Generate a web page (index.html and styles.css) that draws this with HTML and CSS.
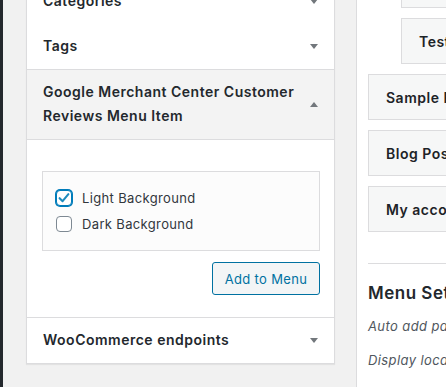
FILE: index.html
```html
<!DOCTYPE html>
<html>
<head>
<meta charset="utf-8">
<link rel="stylesheet" href="styles.css">
</head>
<body>
<div class="page">
  <div class="strip"></div>
  <div class="left">
    <div class="panel">
      <div class="sec">
        <h3 class="title"><span class="title-text">Categories</span><span class="arrow down"></span></h3>
      </div>
      <div class="sec">
        <h3 class="title"><span class="title-text">Tags</span><span class="arrow down"></span></h3>
      </div>
      <div class="sec open">
        <h3 class="title"><span class="title-text">Google Merchant Center Customer Reviews Menu Item</span><span class="arrow up"></span></h3>
        <div class="content">
          <fieldset class="choices">
            <label class="choice">
              <span class="box checked">
                <svg width="14" height="14" viewBox="0 0 14 14"><path d="M2.6 7.2 L5.6 10.2 L11.4 3.2" fill="none" stroke="#1e8cbe" stroke-width="2.1" stroke-linecap="round" stroke-linejoin="round"/></svg>
              </span>
              <span class="choice-label">Light Background</span>
            </label>
            <label class="choice">
              <span class="box"></span>
              <span class="choice-label">Dark Background</span>
            </label>
          </fieldset>
          <div class="actions">
            <button class="btn">Add to Menu</button>
          </div>
        </div>
      </div>
      <div class="sec last">
        <h3 class="title"><span class="title-text">WooCommerce endpoints</span><span class="arrow down"></span></h3>
      </div>
    </div>
  </div>
  <div class="right">
    <div class="item sub"></div>
    <div class="item sub"><span>Test</span></div>
    <div class="item"><span>Sample Page</span></div>
    <div class="item"><span>Blog Posts</span></div>
    <div class="item"><span>My account</span></div>
    <div class="settings">
      <h3 class="settings-title">Menu Settings</h3>
      <p class="setting">Auto add pages</p>
      <p class="setting">Display location</p>
    </div>
  </div>
</div>
</body>
</html>
```

FILE: styles.css
```css
html, body {
  margin: 0;
  padding: 0;
  height: 100%;
  overflow: hidden;
}
body {
  background: #f1f1f1;
  font-family: Inter, "Liberation Sans", sans-serif;
  color: #23282d;
}
.page {
  display: flex;
  height: 387px;
  overflow: hidden;
}
.strip {
  width: 3px;
  flex: none;
  background: #23282d;
}
.left {
  flex: none;
  padding-left: 23px;
  padding-right: 21px;
}
.panel {
  width: 307px;
  margin-top: -22px;
  border: 1px solid #dcdcde;
  background: #fff;
  box-shadow: 0 1px 1px rgba(0,0,0,0.06);
}
.title {
  margin: 0;
  display: flex;
  align-items: center;
  padding: 10px 16px 11px 16px;
  font-size: 14px;
  font-weight: 600;
  line-height: 24px;
  letter-spacing: 0.5px;
  color: #23282d;
}
.title-text {
  flex: 1;
  padding-right: 6px;
}
.arrow {
  width: 0;
  height: 0;
  border-left: 4px solid transparent;
  border-right: 4px solid transparent;
  flex: none;
}
.arrow.down {
  border-top: 5px solid #72777c;
}
.arrow.up {
  border-bottom: 5px solid #72777c;
}
.sec.open {
  border-top: 1px solid #dcdcde;
  border-bottom: 1px solid #dcdcde;
}
.sec.open .title {
  background: #f3f3f3;
  border-bottom: 1px solid #dcdcde;
}
.content {
  padding: 31px 14px 22px 15px;
}
.choices {
  margin: 0;
  border: 1px solid #dcdcde;
  background: #fcfcfc;
  padding: 13px 12px 13px 13px;
}
.choice {
  display: flex;
  align-items: center;
  height: 26px;
  font-size: 13px;
  letter-spacing: 0.35px;
  color: #32373c;
}
.box {
  width: 14px;
  height: 14px;
  border: 1px solid #7e8993;
  border-radius: 4px;
  background: #fff;
  display: flex;
  align-items: center;
  justify-content: center;
  flex: none;
}
.box.checked {
  border-color: #007cba;
  box-shadow: 0 0 0 1px #007cba;
}
.choice-label {
  margin-left: 10px;
}
.actions {
  display: flex;
  justify-content: flex-end;
  margin-top: 11px;
}
.btn {
  font-family: inherit;
  font-size: 13px;
  letter-spacing: 0.35px;
  height: 33px;
  padding: 0;
  border: 1px solid #0071a1;
  border-radius: 3px;
  background: #f3f5f6;
  color: #0071a1;
  width: 108px;
}
.right {
  flex: 1;
  border-left: 1px solid #dcdcde;
  background: #fff;
  padding-left: 11px;
  margin-top: -38px;
  min-width: 0;
}
.item {
  box-sizing: border-box;
  width: 200px;
  height: 46px;
  margin-bottom: 10px;
  border: 1px solid #dcdcde;
  background: #f6f7f7;
  display: flex;
  align-items: center;
  padding-left: 17px;
  font-size: 14px;
  font-weight: 600;
  letter-spacing: 0.5px;
  color: #1d2327;
  white-space: nowrap;
}
.item.sub {
  margin-left: 33px;
}
.settings {
  margin-top: 31px;
  border-top: 1px solid #dcdcde;
  white-space: nowrap;
}
.settings-title {
  margin: 18px 0 0 0;
  font-size: 17px;
  font-weight: 600;
  line-height: 22px;
  letter-spacing: 0.5px;
  color: #23282d;
}
.setting {
  margin: 0;
  font-size: 13px;
  font-style: italic;
  letter-spacing: 0.4px;
  color: #50575e;
  line-height: 34px;
}
.settings-title + .setting {
  margin-top: 5px;
}
```
